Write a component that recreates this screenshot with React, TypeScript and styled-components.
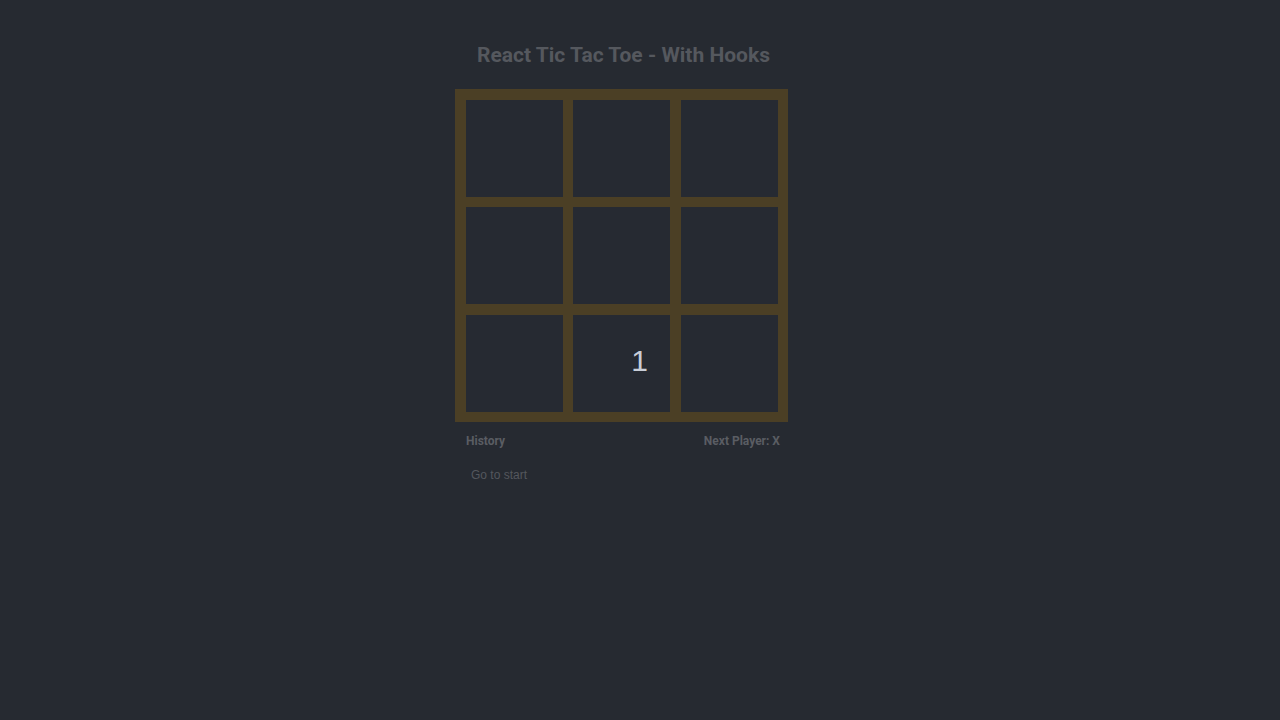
import React from "react";
import styled, { createGlobalStyle } from "styled-components";

const Global = createGlobalStyle`
  html, body { margin: 0; padding: 0; background: #262a31; }
  body { font-family: "Liberation Sans", Arial, sans-serif; }
`;

const Page = styled.div`
  min-height: 720px;
  display: flex;
  justify-content: center;
  padding-right: 37px;
  box-sizing: border-box;
`;

const Column = styled.div`
  display: flex;
  flex-direction: column;
  align-items: center;
  padding-top: 42px;
`;

const Title = styled.h1`
  margin: 0 0 21px;
  padding-left: 4px;
  font-family: Roboto, "Liberation Sans", sans-serif;
  font-weight: 700;
  font-size: 21px;
  line-height: 26px;
  color: #55585e;
`;

const Board = styled.div`
  display: grid;
  grid-template-columns: 97px 98px 97px;
  grid-template-rows: 97px 98px 97px;
  gap: 10px;
  padding: 11px 10px 10px 11px;
  background: #4b3f25;
`;

const Cell = styled.button<{ $offset?: number }>`
  width: 97px;
  height: 97px;
  border: none;
  margin: 0;
  padding: 0 0 6px ${(p) => p.$offset ?? 0}px;
  background: #262a32;
  color: #c8cdd7;
  font-family: "Liberation Sans", Arial, sans-serif;
  font-size: 30px;
  display: flex;
  align-items: center;
  justify-content: center;
  cursor: pointer;

  &:nth-child(3n + 3) {
    justify-self: end;
  }
  &:nth-child(n + 7) {
    align-self: end;
  }
`;

const Footer = styled.div`
  width: 333px;
  box-sizing: border-box;
  padding: 12px 8px 0 11px;
`;

const InfoRow = styled.div`
  display: flex;
  justify-content: space-between;
  font-family: Roboto, "Liberation Sans", sans-serif;
  font-size: 12px;
  font-weight: 700;
  color: #5a5d63;
  line-height: 14px;
`;

const HistoryList = styled.ol`
  list-style: none;
  margin: 17px 0 0;
  padding: 0 0 0 5px;
`;

const StartButton = styled.button`
  border: none;
  background: transparent;
  padding: 0;
  font-family: "Liberation Sans", Arial, sans-serif;
  font-size: 12px;
  color: #54575d;
  line-height: 14px;
  cursor: pointer;
`;

const squares: (string | null)[] = [null, null, null, null, null, null, null, "1", null];

export default function App() {
  return (
    <Page>
      <Global />
      <Column>
        <Title>React Tic Tac Toe - With Hooks</Title>
        <Board>
          {squares.map((s, i) => (
            <Cell key={i} $offset={s ? 36 : 0}>
              {s}
            </Cell>
          ))}
        </Board>
        <Footer>
          <InfoRow>
            <span>History</span>
            <span>Next Player: X</span>
          </InfoRow>
          <HistoryList>
            <li>
              <StartButton>Go to start</StartButton>
            </li>
          </HistoryList>
        </Footer>
      </Column>
    </Page>
  );
}
